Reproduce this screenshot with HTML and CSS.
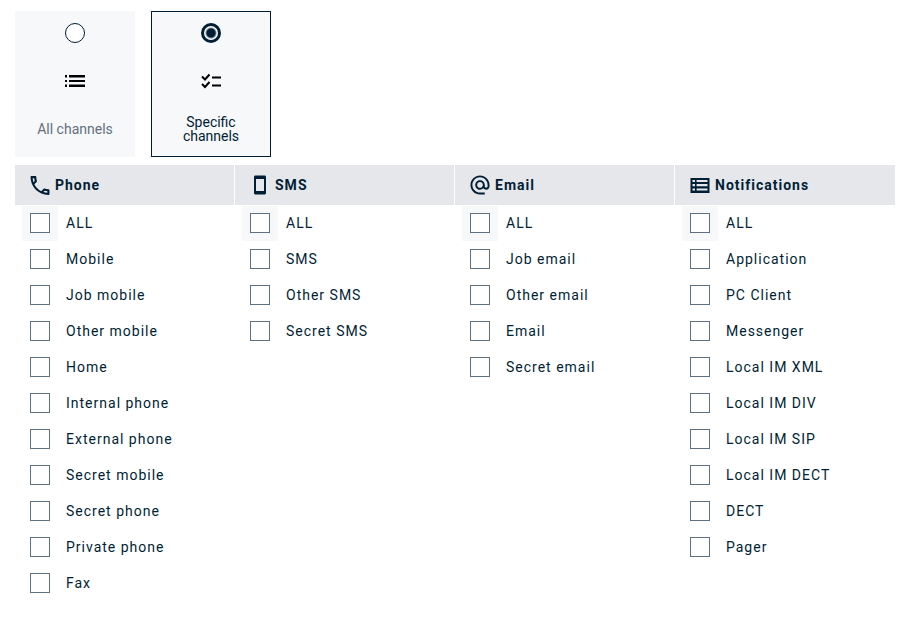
FILE: index.html
```html
<!DOCTYPE html>
<html lang="en">
<head>
    <meta charset="UTF-8">
    <meta name="viewport" content="width=device-width, initial-scale=1.0">
    <title>Channels</title>
    <link rel="stylesheet" href="styles.css">
</head>
<body>
    <form class="container">
        <!-- Channel mode -->
        <div class="modes">
            <label class="mode">
                <input type="radio" name="mode" value="all">
                <svg class="mode-icon" viewBox="0 0 20 20">
                    <path d="M0 4h2v2.4H0zM0 9h2v2H0zM0 13.6h2V16H0zM4 4h16v2.4H4zM4 9h16v2H4zM4 13.6h16V16H4z"/>
                </svg>
                <span class="mode-text">All channels</span>
            </label>
            <label class="mode">
                <input type="radio" name="mode" value="specific" checked>
                <svg class="mode-icon" viewBox="0 0 20 20">
                    <path d="M11 5.5h9v2h-9zM11 13.5h9v2h-9z"/>
                    <path class="line" d="M1 5.5l3 3 4.5-5M1 13l3 3 4.5-5"/>
                </svg>
                <span class="mode-text">Specific channels</span>
            </label>
        </div>

        <!-- Channel list -->
        <div class="channels">
            <section class="column">
                <h2 class="column-title">
                    <svg class="column-icon" viewBox="2.5 2 19 19">
                        <path d="M6.54 5c.06.89.21 1.76.45 2.59l-1.2 1.2c-.41-1.2-.67-2.47-.76-3.79h1.51m9.86 12.02c.85.24 1.72.39 2.6.45v1.49c-1.32-.09-2.59-.35-3.8-.75l1.2-1.19M7.5 3H4c-.55 0-1 .45-1 1 0 9.39 7.61 17 17 17 .55 0 1-.45 1-1v-3.49c0-.55-.45-1-1-1-1.24 0-2.45-.2-3.57-.57-.1-.04-.21-.05-.31-.05-.26 0-.51.1-.71.29l-2.2 2.2c-2.83-1.45-5.15-3.76-6.59-6.59l2.2-2.2c.28-.28.36-.67.25-1.02C8.7 6.45 8.5 5.25 8.5 4c0-.55-.45-1-1-1z"/>
                    </svg>
                    <span>Phone</span>
                </h2>
                <label class="channel all"><input type="checkbox"><span>ALL</span></label>
                <label class="channel"><input type="checkbox"><span>Mobile</span></label>
                <label class="channel"><input type="checkbox"><span>Job mobile</span></label>
                <label class="channel"><input type="checkbox"><span>Other mobile</span></label>
                <label class="channel"><input type="checkbox"><span>Home</span></label>
                <label class="channel"><input type="checkbox"><span>Internal phone</span></label>
                <label class="channel"><input type="checkbox"><span>External phone</span></label>
                <label class="channel"><input type="checkbox"><span>Secret mobile</span></label>
                <label class="channel"><input type="checkbox"><span>Secret phone</span></label>
                <label class="channel"><input type="checkbox"><span>Private phone</span></label>
                <label class="channel"><input type="checkbox"><span>Fax</span></label>
            </section>

            <section class="column">
                <h2 class="column-title">
                    <svg class="column-icon" viewBox="0 0 20 20">
                        <path fill-rule="evenodd" d="M5.5.5h9c.9 0 1.5.7 1.5 1.5v16c0 .8-.6 1.5-1.5 1.5h-9c-.9 0-1.5-.7-1.5-1.5V2c0-.8.6-1.5 1.5-1.5zM6 4v12h8V4z"/>
                    </svg>
                    <span>SMS</span>
                </h2>
                <label class="channel all"><input type="checkbox"><span>ALL</span></label>
                <label class="channel"><input type="checkbox"><span>SMS</span></label>
                <label class="channel"><input type="checkbox"><span>Other SMS</span></label>
                <label class="channel"><input type="checkbox"><span>Secret SMS</span></label>
            </section>

            <section class="column">
                <h2 class="column-title">
                    <svg class="column-icon" viewBox="1.5 1.5 21 21">
                        <path d="M12 1.95c-5.52 0-10 4.48-10 10s4.48 10 10 10h5v-2h-5c-4.34 0-8-3.66-8-8s3.66-8 8-8 8 3.66 8 8v1.43c0 .79-.71 1.57-1.5 1.57s-1.5-.78-1.5-1.57v-1.43c0-2.76-2.24-5-5-5s-5 2.24-5 5 2.24 5 5 5c1.38 0 2.64-.56 3.54-1.47.65.89 1.77 1.47 2.96 1.47 1.97 0 3.5-1.6 3.5-3.57v-1.43c0-5.52-4.48-10-10-10zm0 13c-1.66 0-3-1.34-3-3s1.34-3 3-3 3 1.34 3 3-1.34 3-3 3z"/>
                    </svg>
                    <span>Email</span>
                </h2>
                <label class="channel all"><input type="checkbox"><span>ALL</span></label>
                <label class="channel"><input type="checkbox"><span>Job email</span></label>
                <label class="channel"><input type="checkbox"><span>Other email</span></label>
                <label class="channel"><input type="checkbox"><span>Email</span></label>
                <label class="channel"><input type="checkbox"><span>Secret email</span></label>
            </section>

            <section class="column">
                <h2 class="column-title">
                    <svg class="column-icon" viewBox="0 0 20 20">
                        <path fill-rule="evenodd" d="M.5 3h19v15H.5zM2.5 5v2H5V5zM6.6 5v2h10.900V5zM2.5 9v2.2H5V9zM6.6 9v2.2h10.900V9zM2.5 13.500v2H5v-2zM6.6 13.500v2h10.900v-2z"/>
                    </svg>
                    <span>Notifications</span>
                </h2>
                <label class="channel all"><input type="checkbox"><span>ALL</span></label>
                <label class="channel"><input type="checkbox"><span>Application</span></label>
                <label class="channel"><input type="checkbox"><span>PC Client</span></label>
                <label class="channel"><input type="checkbox"><span>Messenger</span></label>
                <label class="channel"><input type="checkbox"><span>Local IM XML</span></label>
                <label class="channel"><input type="checkbox"><span>Local IM DIV</span></label>
                <label class="channel"><input type="checkbox"><span>Local IM SIP</span></label>
                <label class="channel"><input type="checkbox"><span>Local IM DECT</span></label>
                <label class="channel"><input type="checkbox"><span>DECT</span></label>
                <label class="channel"><input type="checkbox"><span>Pager</span></label>
            </section>
        </div>
    </form>
</body>
</html>
```
FILE: styles.css
```css
* {
    margin: 0;
    padding: 0;
    box-sizing: border-box;
}

body {
    background: #fff;
    font-family: Roboto, "Liberation Sans", sans-serif;
    font-size: 14px;
    color: #001e34;
}

.container {
    padding: 11px 18px 24px 15px;
}

.modes {
    display: flex;
    gap: 16px;
    margin-bottom: 8px;
}

.mode {
    width: 120px;
    height: 146px;
    padding: 11px 16px 8px;
    background: #f6f8fa;
    border: 1px solid #f6f8fa;
    display: flex;
    flex-direction: column;
    align-items: center;
    color: #64707c;
    cursor: pointer;
}

.mode:has(input:checked) {
    border-color: #001e34;
    color: #001e34;
}

.mode input {
    appearance: none;
    width: 20px;
    height: 20px;
    border: 1px solid #001e34;
    border-radius: 50%;
    background: #fff;
}

.mode input:checked {
    border-width: 3px;
    background: radial-gradient(circle, #001e34 4px, #fff 6px);
}

.mode-icon {
    width: 20px;
    height: 20px;
    margin-top: 28px;
}

.mode-icon .line {
    fill: none;
    stroke: #000;
    stroke-width: 2;
}

.mode-text {
    flex: 1;
    display: flex;
    align-items: center;
    margin-top: 18px;
    line-height: 14px;
    text-align: center;
}

.channels {
    display: grid;
    grid-template-columns: repeat(4, 1fr);
}

.column-title {
    position: relative;
    height: 40px;
    padding: 0 15px;
    display: flex;
    align-items: center;
    gap: 5px;
    background: #e6e7eb;
    border-right: 1px solid #fff;
    box-shadow: 0 1px #fff;
    font-size: 14px;
    font-weight: 700;
    line-height: 18px;
    letter-spacing: 1px;
}

.column:last-child .column-title {
    border-right: none;
}

.column-icon {
    width: 20px;
    height: 20px;
    fill: #001e34;
}

.channel {
    height: 36px;
    padding-left: 7px;
    display: flex;
    align-items: center;
    gap: 8px;
    letter-spacing: 1px;
    cursor: pointer;
}

.channel input {
    appearance: none;
    width: 20px;
    height: 20px;
    background: #fff;
    border: 1px solid #5f7080;
    outline: 8px solid transparent;
    margin: 0 8px;
}

.channel.all input {
    outline-color: #f6f8fa;
}
```
